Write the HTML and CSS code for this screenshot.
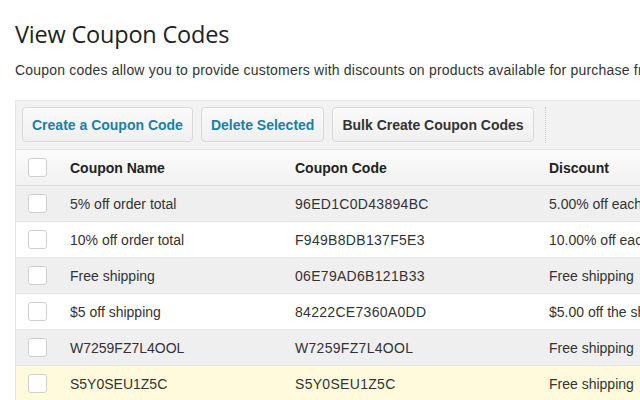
FILE: index.html
```html
<!DOCTYPE html>
<html>
<head>
<meta charset="utf-8">
<link rel="stylesheet" href="styles.css">
</head>
<body>
<div class="page">
  <h1 class="title">View Coupon Codes</h1>
  <p class="intro">Coupon codes allow you to provide customers with discounts on products available for purchase from your store.</p>
  <div class="panel">
    <div class="toolbar">
      <button class="btn btn-blue">Create a Coupon Code</button>
      <button class="btn btn-blue">Delete Selected</button>
      <button class="btn btn-dark">Bulk Create Coupon Codes</button>
      <span class="sep"></span>
    </div>
    <table class="grid">
      <thead>
        <tr><th class="c-check"><span class="box"></span></th><th class="c-name">Coupon Name</th><th class="c-code">Coupon Code</th><th class="c-disc">Discount</th></tr>
      </thead>
      <tbody>
        <tr class="odd"><td class="c-check"><span class="box"></span></td><td>5% off order total</td><td class="code">96ED1C0D43894BC</td><td>5.00% off each item</td></tr>
        <tr><td class="c-check"><span class="box"></span></td><td>10% off order total</td><td class="code">F949B8DB137F5E3</td><td>10.00% off each item</td></tr>
        <tr class="odd"><td class="c-check"><span class="box"></span></td><td>Free shipping</td><td class="code">06E79AD6B121B33</td><td>Free shipping</td></tr>
        <tr><td class="c-check"><span class="box"></span></td><td>$5 off shipping</td><td class="code">84222CE7360A0DD</td><td>$5.00 off the shipping</td></tr>
        <tr class="odd"><td class="c-check"><span class="box"></span></td><td>W7259FZ7L4OOL</td><td class="code">W7259FZ7L4OOL</td><td>Free shipping</td></tr>
        <tr class="hl"><td class="c-check"><span class="box"></span></td><td>S5Y0SEU1Z5C</td><td class="code">S5Y0SEU1Z5C</td><td>Free shipping</td></tr>
      </tbody>
    </table>
  </div>
</div>
</body>
</html>
```
FILE: styles.css
```css
html, body { margin: 0; padding: 0; background: #fff; overflow: hidden; }
body { width: 640px; height: 400px; }
.page { padding: 0 0 0 15px; width: 900px; font-family: "Liberation Sans", Arial, sans-serif; }
.title {
  margin: 0; padding-top: 18px;
  font-family: "Open Sans", sans-serif; font-weight: 400;
  font-size: 23.5px; line-height: 32px; color: #222;
  letter-spacing: -0.2px;
}
.intro { margin: 12px 0 0; font-size: 14px; line-height: 17px; color: #333; white-space: nowrap; letter-spacing: 0.2px; }
.panel { margin-top: 21px; border-left: 1px solid #e6e6e6; border-top: 1px solid #e8e8e8; }
.toolbar {
  display: flex; align-items: center; gap: 8px;
  background: #f2f2f2; padding: 6px 0 7px 6px; height: 35px;
}
.btn {
  height: 35px; padding: 0 9px; border: 1px solid #d9d9d9; border-radius: 4px;
  background: linear-gradient(#fafafa, #f0f0f0);
  font-family: "Liberation Sans", Arial, sans-serif; font-weight: bold; font-size: 14px;
  box-shadow: inset 0 1px 0 #fff;
}
.btn-blue { color: #1c7fa6; }
.btn-dark { color: #333; }
.sep { width: 0; height: 36px; border-left: 1px dotted #c8c8c8; margin-left: 3px; }
.grid { border-collapse: collapse; width: 900px; font-size: 14px; color: #333; }
.grid th, .grid td { text-align: left; padding: 0; height: 36px; box-sizing: border-box; }
.grid thead tr { background: linear-gradient(#fbfbfb, #f1f1f1); }
.grid th { font-weight: bold; color: #222; border-bottom: 1px solid #dcdcdc; border-top: 1px solid #e4e4e4; }
.grid td { border-bottom: 1px solid #e4e4e4; }
.grid td.code { letter-spacing: 0.3px; }
.grid tbody tr { background: #fff; }
.grid tbody tr.odd { background: #efefef; }
.grid tbody tr.hl { background: #fffadb; }
.c-check { width: 54px; padding-left: 12px !important; }
.c-name { width: 225px; }
.c-code { width: 254px; }
.box {
  display: block; width: 17px; height: 17px; border: 1px solid #cfcfcf; border-radius: 3px;
  background: #fff;
}
```
